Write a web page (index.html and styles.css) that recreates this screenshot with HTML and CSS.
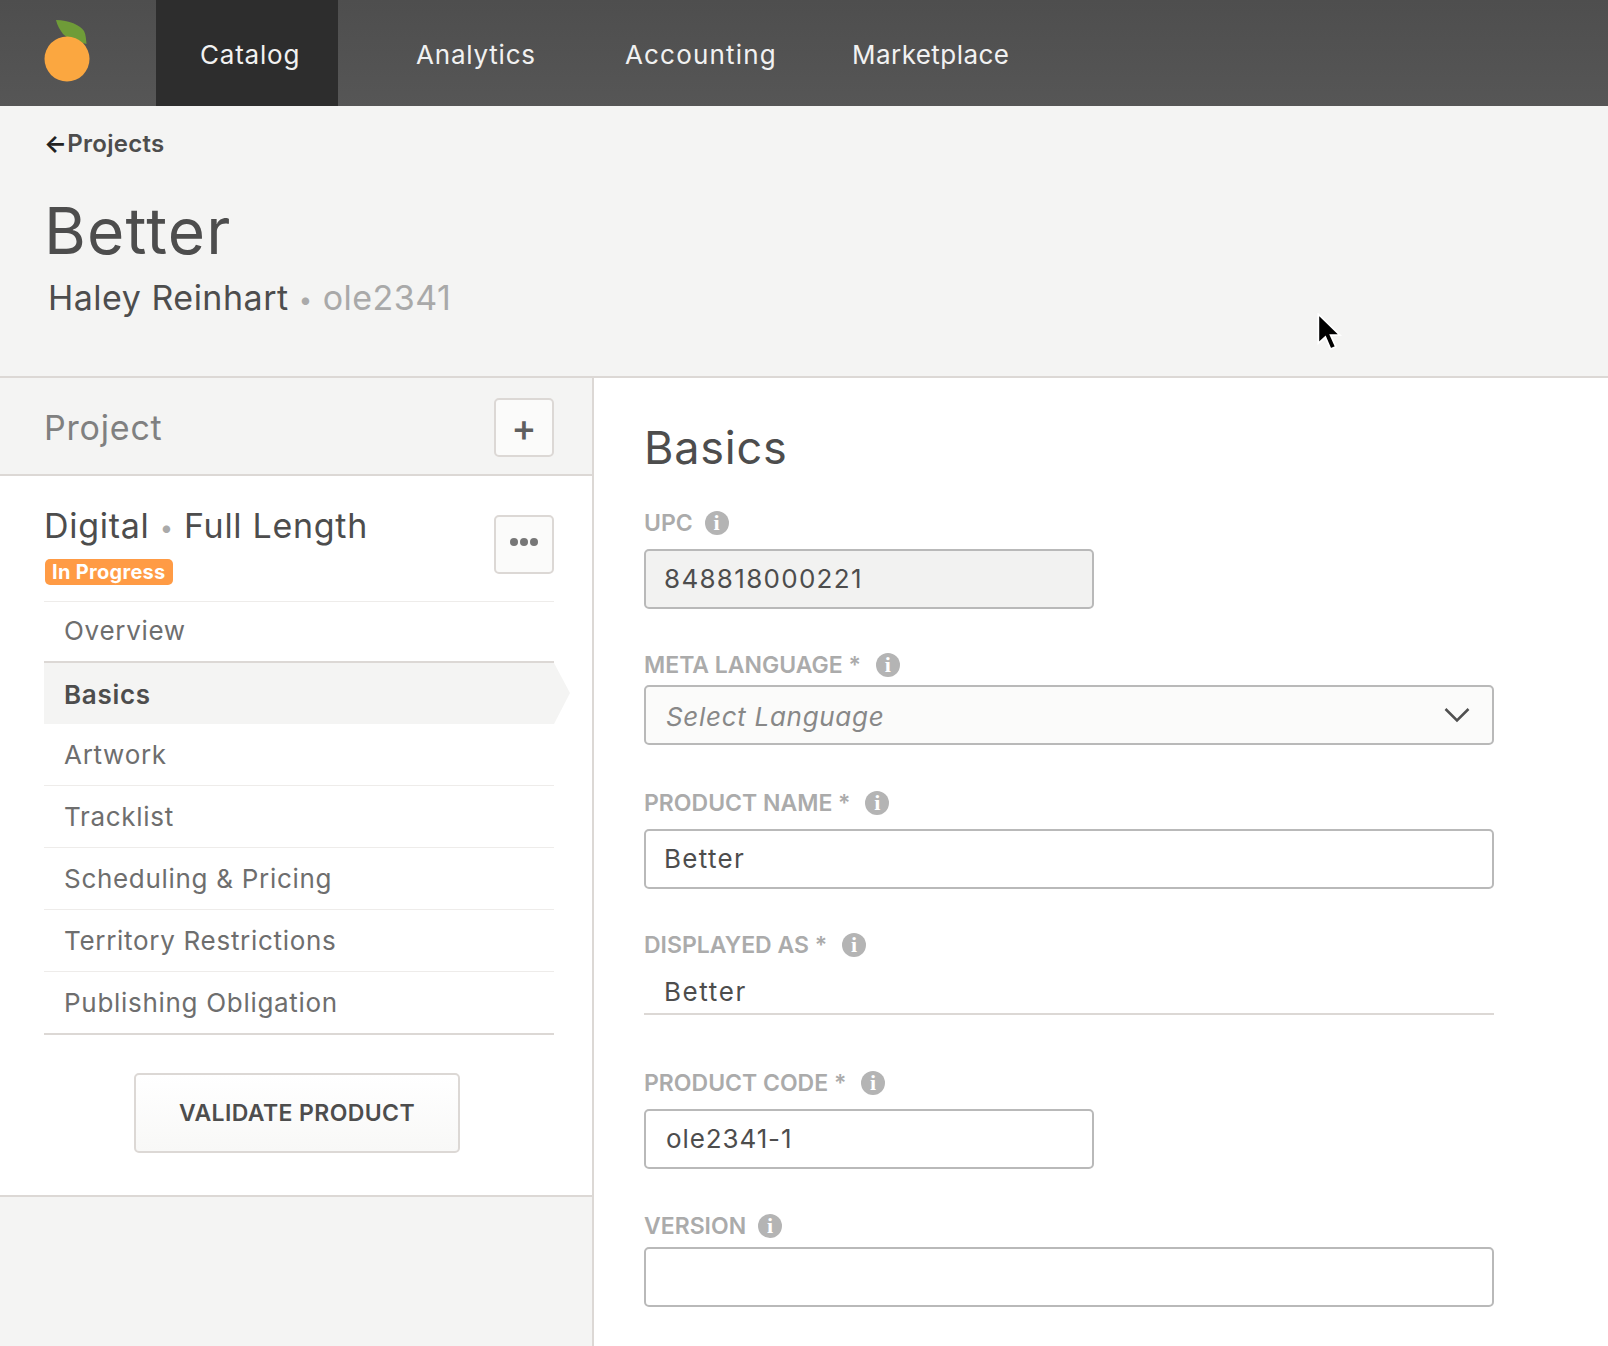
FILE: index.html
```html
<!DOCTYPE html>
<html lang="en">
<head>
  <meta charset="UTF-8" />
  <title>Better | Catalog</title>
  <link rel="stylesheet" href="styles.css">
</head>
<body>
  <nav class="topbar">
    <a class="logo" href="#">
      <svg width="46" height="62" viewBox="0 0 46 62">
        <path d="M12 0C25 0 36 5 40 11C42 15 42 19 42.500 24C33 21 24 19 19 14C16 10 13 5 12 0Z" fill="#6f9c38"/>
        <circle cx="23" cy="39" r="22.500" fill="#fba740"/>
      </svg>
    </a>
    <a class="tab tab-active" href="#">Catalog</a>
    <a class="tab tab-analytics" href="#">Analytics</a>
    <a class="tab tab-accounting" href="#">Accounting</a>
    <a class="tab tab-marketplace" href="#">Marketplace</a>
  </nav>

  <header class="page-head">
    <a class="back" href="#"><span class="back-arrow">←</span>Projects</a>
    <h1>Better</h1>
    <p class="artist">Haley Reinhart <span class="muted"><span class="dot">•</span> ole2341</span></p>
  </header>

  <div class="content">
    <aside class="sidebar">
      <div class="side-head">
        <h3>Project</h3>
        <button class="square-btn plus">+</button>
      </div>
      <div class="side-body">
        <div class="product">
          <div>
            <div class="product-name">Digital <span class="dot">•</span> Full Length</div>
            <span class="badge">In Progress</span>
          </div>
          <button class="square-btn more"><i></i><i></i><i></i></button>
        </div>
        <ul class="side-nav">
          <li class="first">Overview</li>
          <li class="active">Basics</li>
          <li>Artwork</li>
          <li>Tracklist</li>
          <li>Scheduling &amp; Pricing</li>
          <li>Territory Restrictions</li>
          <li class="last">Publishing Obligation</li>
        </ul>
        <button class="validate">VALIDATE PRODUCT</button>
      </div>
      <div class="side-foot"></div>
    </aside>

    <main class="main">
      <h2>Basics</h2>

      <div class="field-label label-first">UPC <span class="info">i</span></div>
      <input class="input input-short input-locked" type="text" value="848818000221">

      <div class="field-label label-meta label-star">META LANGUAGE * <span class="info">i</span></div>
      <div class="input select">
        <span>Select Language</span>
        <svg width="26" height="16" viewBox="0 0 26 16"><path d="M1.500 2L13 13.500L24.500 2" fill="none" stroke="#505050" stroke-width="2.500"/></svg>
      </div>

      <div class="field-label label-star">PRODUCT NAME * <span class="info">i</span></div>
      <input class="input" type="text" value="Better">

      <div class="field-label label-plain label-star">DISPLAYED AS * <span class="info">i</span></div>
      <div class="plain-value">Better</div>

      <div class="field-label label-code label-star">PRODUCT CODE * <span class="info">i</span></div>
      <input class="input input-short input-code" type="text" value="ole2341-1">

      <div class="field-label label-version">VERSION <span class="info">i</span></div>
      <input class="input" type="text" value="">
    </main>
  </div>

  <!-- mouse pointer caught in the capture -->
  <svg class="pointer" width="28" height="42" viewBox="0 0 24 36">
    <path d="M2 1V26L8 20.500L12.500 31L17 29L12.500 19H20.500Z" fill="#000" stroke="#fff" stroke-width="1.500"/>
  </svg>
</body>
</html>
```

FILE: styles.css
```css
* {
  box-sizing: border-box;
}

body {
  margin: 0;
  height: 1346px;
  overflow: hidden;
  position: relative;
  background-color: #fff;
  color: #4d4d4d;
  font-family: 'Inter', 'Noto Sans', sans-serif;
}

a {
  color: inherit;
  text-decoration: none;
}

.topbar {
  display: flex;
  height: 106px;
  background: linear-gradient(#4e4e4e, #565656);
  color: #f1f1f1;
  font-size: 26px;
  letter-spacing: 0.8px;
}

.logo {
  width: 156px;
  padding: 20px 0 0 44px;
}

.tab {
  display: flex;
  align-items: center;
  padding-top: 2px;
}

.tab-active {
  width: 182px;
  padding-left: 44px;
  background: #2d2d2d;
}

.tab-analytics {
  margin-left: 78px;
}

.tab-accounting {
  margin-left: 89px;
  letter-spacing: 1.2px;
}

.tab-marketplace {
  margin-left: 75px;
  letter-spacing: 0.45px;
}

.page-head {
  height: 272px;
  padding: 24px 46px 0;
  background: #f4f4f3;
  border-bottom: 2px solid #dcd8d5;
}

.back {
  display: block;
  font-size: 24px;
  font-weight: 600;
  letter-spacing: 0.3px;
  line-height: 28px;
}

.back-arrow {
  margin-left: -2px;
  color: #222;
  font-weight: 700;
}

h1 {
  margin: 38px 0 0 -2px;
  font-size: 64px;
  font-weight: 400;
  letter-spacing: 1.2px;
  line-height: 70px;
}

.artist {
  margin: 11px 0 0 2px;
  font-size: 34px;
  letter-spacing: 0.5px;
  line-height: 42px;
}

.muted {
  color: #a9a9a9;
}

.dot {
  color: #aaa;
  font-size: 0.7em;
  vertical-align: 0.08em;
}

.content {
  display: flex;
}

.sidebar {
  display: flex;
  flex-direction: column;
  width: 594px;
  height: 968px;
  border-right: 2px solid #dcd8d5;
}

.side-head {
  display: flex;
  align-items: center;
  justify-content: space-between;
  height: 98px;
  padding: 2px 38px 0 44px;
  background: #f4f4f3;
  border-bottom: 2px solid #dcd8d5;
}

h3 {
  margin: 0;
  color: #808080;
  font-size: 34px;
  font-weight: 400;
  letter-spacing: 0.8px;
}

.square-btn {
  width: 60px;
  height: 59px;
  padding: 0;
  background: #fbfbfa;
  border: 2px solid #dcd8d5;
  border-radius: 5px;
  color: #5f5f5f;
  font-family: inherit;
}

.plus {
  font-size: 38px;
  font-weight: 500;
  line-height: 46px;
}

.more {
  display: flex;
  align-items: center;
  justify-content: center;
  gap: 2px;
  padding-bottom: 5px;
}

.more i {
  width: 8px;
  height: 8px;
  background: #777;
  border-radius: 50%;
}

.side-body {
  padding: 0 38px 0 44px;
  background: #fff;
}

.product {
  display: flex;
  justify-content: space-between;
  height: 126px;
  padding-top: 27px;
  border-bottom: 1px solid #eeecea;
}

.product > .square-btn {
  margin-top: 12px;
}

.product-name {
  font-size: 34px;
  letter-spacing: 0.7px;
  line-height: 46px;
}

.badge {
  display: inline-block;
  margin: 8px 0 0 1px;
  padding: 0 7px;
  height: 26px;
  background: #ff9b45;
  border-radius: 5px;
  color: #fff;
  font-size: 20px;
  font-weight: 700;
  letter-spacing: 0.3px;
  line-height: 26px;
  vertical-align: top;
}

.side-nav {
  margin: 0;
  padding: 0;
  list-style: none;
  font-size: 26px;
  letter-spacing: 0.7px;
  color: #6e6e6e;
}

.side-nav li {
  height: 62px;
  padding-left: 20px;
  border-bottom: 1px solid #eeecea;
  line-height: 61px;
}

.side-nav .first {
  height: 61px;
  line-height: 57px;
  border-bottom: 2px solid #dcd8d5;
}

.side-nav .active {
  position: relative;
  height: 61px;
  background: #f4f4f3;
  border-bottom: 0;
  color: #4d4d4d;
  font-weight: 600;
  line-height: 63px;
}

.side-nav .active::after {
  content: "";
  position: absolute;
  top: 0;
  right: -16px;
  border-left: 16px solid #f4f4f3;
  border-top: 30px solid transparent;
  border-bottom: 31px solid transparent;
}

.side-nav .last {
  height: 63px;
  border-bottom: 2px solid #dcd8d5;
}

.validate {
  display: block;
  width: 326px;
  height: 80px;
  margin: 38px 0 0 90px;
  background: linear-gradient(#fff, #f8f8f7);
  border: 2px solid #dcd8d5;
  border-radius: 5px;
  color: #4d4d4d;
  font-family: inherit;
  font-size: 23px;
  font-weight: 600;
  letter-spacing: 0.4px;
}

.side-foot {
  flex: 1;
  margin-top: 42px;
  background: #f4f4f3;
  border-top: 2px solid #dcd8d5;
}

.main {
  flex: 1;
  padding: 39px 0 0 50px;
}

h2 {
  margin: 0;
  font-size: 45px;
  font-weight: 400;
  letter-spacing: 0.8px;
  line-height: 62px;
}

.field-label {
  display: flex;
  align-items: center;
  gap: 6px;
  height: 24px;
  margin: 46px 0 14px;
  color: #ababab;
  font-size: 23px;
  font-weight: 600;
  white-space: pre;
}

.label-first {
  margin: 32px 0 14px;
}

.label-meta {
  margin: 44px 0 8px;
}

.label-plain {
  margin: 44px 0 0;
}

.label-code {
  margin: 56px 0 14px;
}

.label-version {
  margin: 45px 0 9px;
}

.label-star .info {
  margin-left: 3px;
}

.info {
  display: inline-block;
  width: 24px;
  height: 24px;
  background: #b4b4b4;
  border-radius: 50%;
  color: #fff;
  font-family: 'Liberation Serif', serif;
  font-size: 22px;
  font-weight: 700;
  line-height: 24px;
  text-align: center;
}

.input {
  display: block;
  width: 850px;
  height: 60px;
  padding: 0 18px 2px;
  background: #fff;
  border: 2px solid #b9b9b9;
  border-radius: 5px;
  color: #4d4d4d;
  font-family: inherit;
  font-size: 26px;
  letter-spacing: 1.3px;
}

.input-short {
  width: 450px;
}

.input-locked {
  background: #f2f2f1;
}

.input-code {
  padding-left: 20px;
  letter-spacing: 0.9px;
}

.select {
  display: flex;
  align-items: center;
  justify-content: space-between;
  padding: 3px 22px 0 20px;
  background: #fbfbfa;
  color: #888;
  font-style: italic;
  letter-spacing: 0.7px;
}

.select svg {
  margin-top: -3px;
}

.plain-value {
  width: 850px;
  height: 58px;
  padding: 22px 0 0 20px;
  border-bottom: 2px solid #dcd8d5;
  font-size: 26px;
  letter-spacing: 1.6px;
  line-height: 26px;
}

.pointer {
  position: absolute;
  left: 1316px;
  top: 313px;
}
```
